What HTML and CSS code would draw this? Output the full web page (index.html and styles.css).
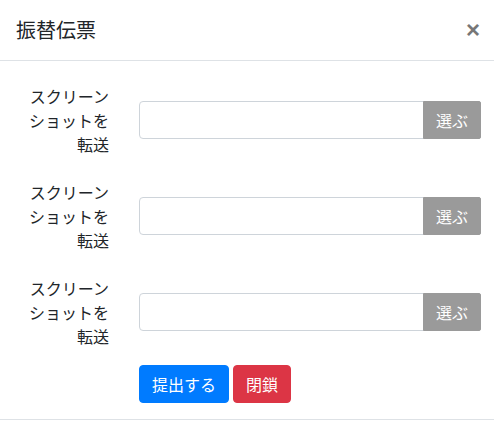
FILE: index.html
```html
<!DOCTYPE html>
<html lang="ja">
<head>
<meta charset="utf-8">
<title>振替伝票</title>
<link rel="stylesheet" href="styles.css">
</head>
<body>
<div class="modal">
  <div class="modal-header">
    <h5 class="modal-title">振替伝票</h5>
    <button class="close" type="button">×</button>
  </div>
  <div class="modal-body">
    <div class="form-row">
      <label class="form-label">スクリーンショットを転送</label>
      <div class="input-group">
        <input class="form-input" type="text">
        <button class="btn btn-pick" type="button">選ぶ</button>
      </div>
    </div>
    <div class="form-row">
      <label class="form-label">スクリーンショットを転送</label>
      <div class="input-group">
        <input class="form-input" type="text">
        <button class="btn btn-pick" type="button">選ぶ</button>
      </div>
    </div>
    <div class="form-row">
      <label class="form-label">スクリーンショットを転送</label>
      <div class="input-group">
        <input class="form-input" type="text">
        <button class="btn btn-pick" type="button">選ぶ</button>
      </div>
    </div>
    <div class="actions">
      <button class="btn btn-primary" type="button">提出する</button>
      <button class="btn btn-danger" type="button">閉鎖</button>
    </div>
  </div>
  <div class="modal-footer"></div>
</div>
</body>
</html>
```
FILE: styles.css
```css
* { box-sizing: border-box; }
html, body { margin: 0; padding: 0; background: #fff; }
body {
  font-family: "Noto Sans CJK JP", "Noto Sans", "Liberation Sans", sans-serif;
  font-size: 16px;
  line-height: 24px;
  color: #212529;
}
.modal { width: 494px; }
.modal-header {
  display: flex;
  align-items: flex-start;
  padding: 16px 14px 16px 16px;
  border-bottom: 1px solid #dee2e6;
}
.modal-title {
  margin: 0;
  font-size: 20px;
  line-height: 28px;
  font-weight: 400;
}
.close {
  margin-left: auto;
  border: 0;
  background: transparent;
  padding: 0;
  font-family: "Liberation Sans", Arial, sans-serif;
  font-size: 24px;
  line-height: 28px;
  font-weight: 700;
  color: #777;
}
.modal-body { padding: 16px 13px 16px 16px; }
.form-row {
  display: flex;
  align-items: center;
  margin-bottom: 10px;
}
.form-label {
  width: 93px;
  padding: 7px 0;
  text-align: right;
  margin-right: 30px;
}
.input-group { display: flex; flex: 1; }
.form-input {
  flex: 1;
  min-width: 0;
  height: 38px;
  border: 1px solid #ced4da;
  border-radius: 4px 0 0 4px;
  padding: 6px 12px;
  font: inherit;
}
.btn {
  font-family: inherit;
  font-size: 16px;
  line-height: 24px;
  padding: 6px 12px;
  border: 1px solid transparent;
  border-radius: 4px;
  color: #fff;
}
.btn-pick {
  background: #9a9a9a;
  border-color: #9a9a9a;
  border-radius: 0 2px 2px 0;
  width: 58px;
  padding: 6px 0;
  margin-left: -1px;
}
.actions { display: flex; gap: 4px; padding-left: 123px; }
.btn-primary { background: #007bff; border-color: #007bff; }
.btn-danger { background: #dc3545; border-color: #dc3545; }
.modal-footer { border-top: 1px solid #dee2e6; height: 20px; }
```
